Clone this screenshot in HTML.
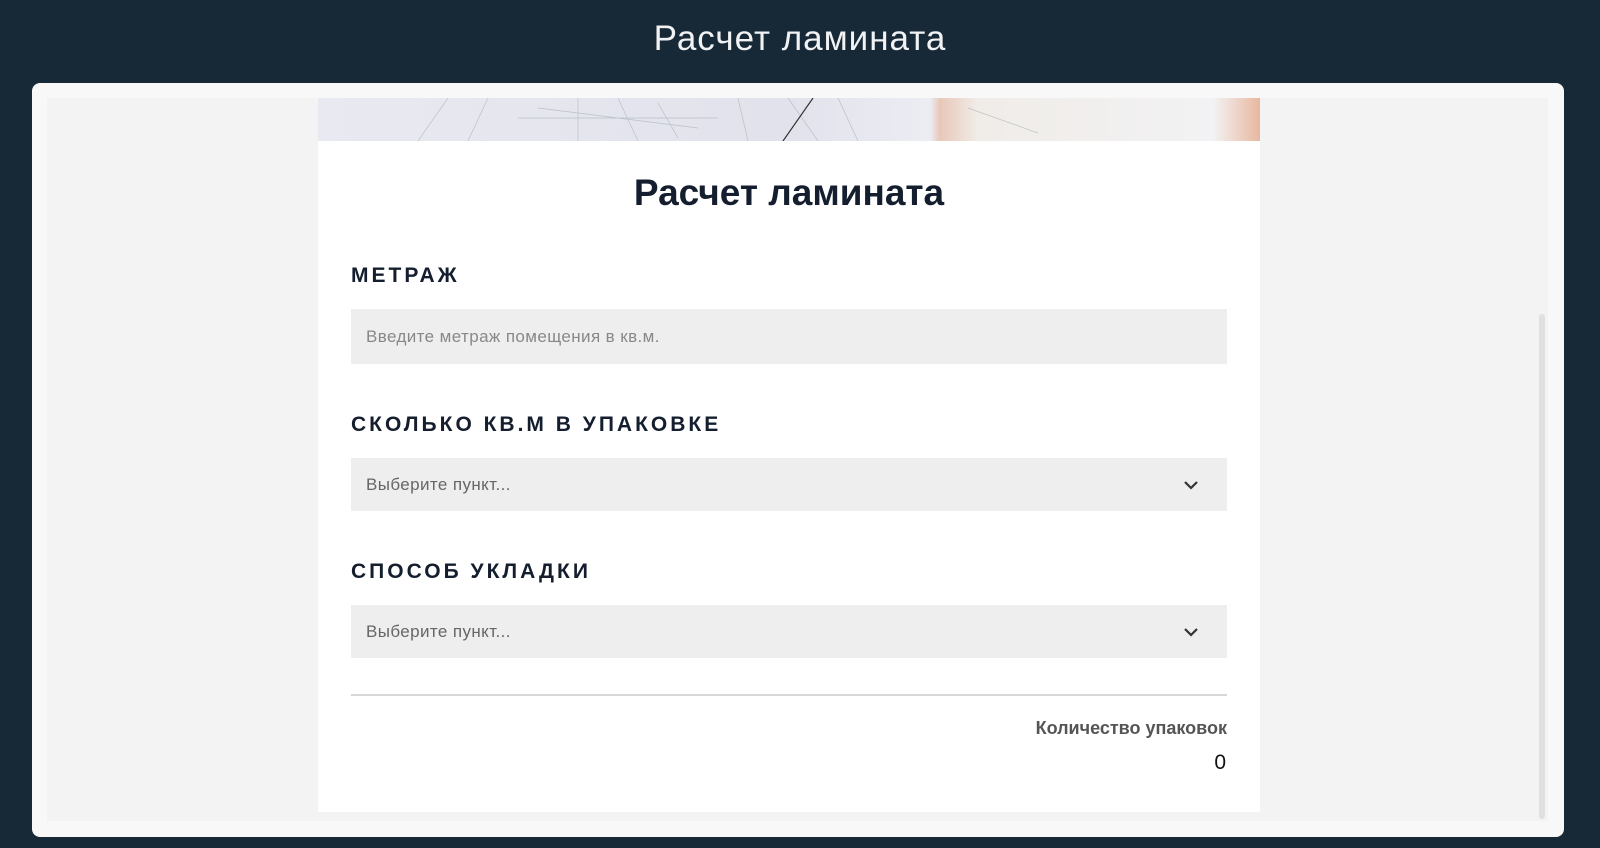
<!DOCTYPE html>
<html><head><meta charset="utf-8"><style>
*{margin:0;padding:0;box-sizing:border-box}
body{width:1600px;height:848px;background:#172837;font-family:"Liberation Sans",sans-serif;position:relative;overflow:hidden}
.h{position:absolute;top:19px;left:0;width:1600px;text-align:center;color:#f0f2f4;font-size:35px;font-weight:300;letter-spacing:1px}
.card{position:absolute;left:32px;top:83px;width:1532px;height:754px;background:#f8f8f8;border-radius:8px}
.inner{position:absolute;left:47px;top:98px;width:1501px;height:723px;background:#f3f3f3}
.form{position:absolute;left:318px;top:98px;width:942px;height:714px;background:#fff}
.banner{position:absolute;left:318px;top:98px;width:942px;height:43px;background:linear-gradient(90deg,#e9e9f1 0%,#e2e2ec 50%,#ececf3 65%,#e8c8b8 66%,#f0ece8 70%,#f2f2f4 95%,#e8b8a0 100%);overflow:hidden}
.t{position:absolute;left:318px;width:942px;text-align:center;top:172px;font-size:37px;font-weight:bold;color:#141e2e}
.lab{position:absolute;left:351px;font-size:21px;font-weight:bold;letter-spacing:3px;color:#141e2e}
.in{position:absolute;left:351px;width:876px;background:#eeeeee;font-size:17px;letter-spacing:0.4px;color:#888;padding-left:15px;display:flex;align-items:center}
.in svg{position:absolute;right:28px}
.hr{position:absolute;left:351px;top:694px;width:876px;height:2px;background:#d8d8d8}
.q{position:absolute;right:373px;top:718px;font-size:18px;color:#555;font-weight:bold}
.z{position:absolute;right:374px;top:751px;font-size:21px;color:#111}
.sb{position:absolute;left:1539px;top:314px;width:6px;height:505px;background:#e0e0e0;border-radius:3px}
</style></head><body>
<div class="h">Расчет ламината</div>
<div class="card"></div><div class="inner"></div>
<div class="form"></div>
<div class="banner"><svg width="942" height="43"><g stroke="#9aa" stroke-width="0.7" fill="none" opacity="0.6"><path d="M100 43 L130 0 M150 43 L170 0 M200 20 L400 20 M220 10 L380 30 M260 0 L260 43 M300 0 L320 43 M340 5 L360 40 M420 0 L430 43 M470 0 L500 43 M520 0 L540 43 M650 10 L720 35"/></g><path d="M465 43 L495 0" stroke="#333" stroke-width="1.2"/></svg></div>
<div class="t">Расчет ламината</div>
<div class="lab" style="top:264px">МЕТРАЖ</div>
<div class="in" style="top:309px;height:55px">Введите метраж помещения в кв.м.</div>
<div class="lab" style="top:413px">СКОЛЬКО КВ.М В УПАКОВКЕ</div>
<div class="in" style="top:458px;height:53px;color:#666">Выберите пункт...<svg width="16" height="10" viewBox="0 0 16 10"><path d="M2 2 L8 8 L14 2" stroke="#333" stroke-width="2.2" fill="none"/></svg></div>
<div class="lab" style="top:560px">СПОСОБ УКЛАДКИ</div>
<div class="in" style="top:605px;height:53px;color:#666">Выберите пункт...<svg width="16" height="10" viewBox="0 0 16 10"><path d="M2 2 L8 8 L14 2" stroke="#333" stroke-width="2.2" fill="none"/></svg></div>
<div class="hr"></div>
<div class="q">Количество упаковок</div>
<div class="z">0</div>
<div class="sb"></div>
</body></html>
